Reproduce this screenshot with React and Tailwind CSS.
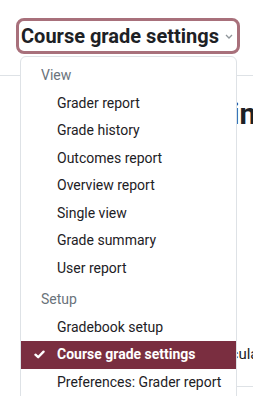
import React from 'react';

const groups = [
    {
        label: 'View',
        items: ['Grader report', 'Grade history', 'Outcomes report', 'Overview report', 'Single view', 'Grade summary', 'User report'],
    },
    {
        label: 'Setup',
        items: ['Gradebook setup', 'Course grade settings', 'Preferences: Grader report'],
    },
];

const selected = 'Course grade settings';

function Check() {
    return (
        <svg viewBox="0 0 12 10" className="h-[9px] w-[11px]" fill="none">
            <path d="M1.5 5.2 L4.5 8 L10.5 1.8" stroke="white" strokeWidth="2.6" strokeLinecap="round" strokeLinejoin="round" />
        </svg>
    );
}

export default function App() {
    return (
        <div className="relative h-[396px] w-[253px] overflow-hidden bg-white font-['Roboto',sans-serif] text-[#1d2125]">
            {/* select */}
            <div className="pl-4 pt-[18px]">
                <div className="inline-flex h-[36px] w-[224px] items-center rounded-lg border-[3px] border-[#a8707b] pl-[2px] pr-[4px]">
                    <span className="text-[20px] font-bold leading-none whitespace-nowrap">Course grade settings</span>
                    <svg viewBox="0 0 8 5" className="ml-auto h-[5px] w-[8px]" fill="none">
                        <path d="M1 1 L4 4 L7 1" stroke="#8f959a" strokeWidth="1.3" />
                    </svg>
                </div>
            </div>

            {/* page behind */}
            <div className="mt-[21px] border-t border-[#dee2e6]" />
            <h2 className="mt-[20px] ml-[92px] text-[30px] font-bold leading-[36px] whitespace-nowrap">Grade settings</h2>
            <p className="mt-[212px] ml-[209px] text-[15px] leading-[20px] whitespace-nowrap">Calculation</p>
            <div className="mt-[22px] ml-[236px] border-t border-[#dee2e6]" />

            {/* dropdown */}
            <div className="absolute left-[20px] top-[56px] w-[217px] rounded-t-md border border-[#dee2e6] bg-white pt-[5px] text-[14px]">
                {groups.map((g, gi) => (
                    <div key={g.label} className={gi > 0 ? 'mt-[4px]' : ''}>
                        <div className="flex h-[27.5px] items-center pl-[20px] text-[#6a737b]">{g.label}</div>
                        {g.items.map((item) =>
                            item === selected ? (
                                <div key={item} className="flex h-[27.5px] items-center bg-[#7a2e40] text-white font-bold">
                                    <span className="flex w-[36px] justify-center pl-[1px]"><Check /></span>
                                    {item}
                                </div>
                            ) : (
                                <div key={item} className="flex h-[27.5px] items-center pl-[36px]">{item}</div>
                            )
                        )}
                    </div>
                ))}
            </div>
        </div>
    );
}
